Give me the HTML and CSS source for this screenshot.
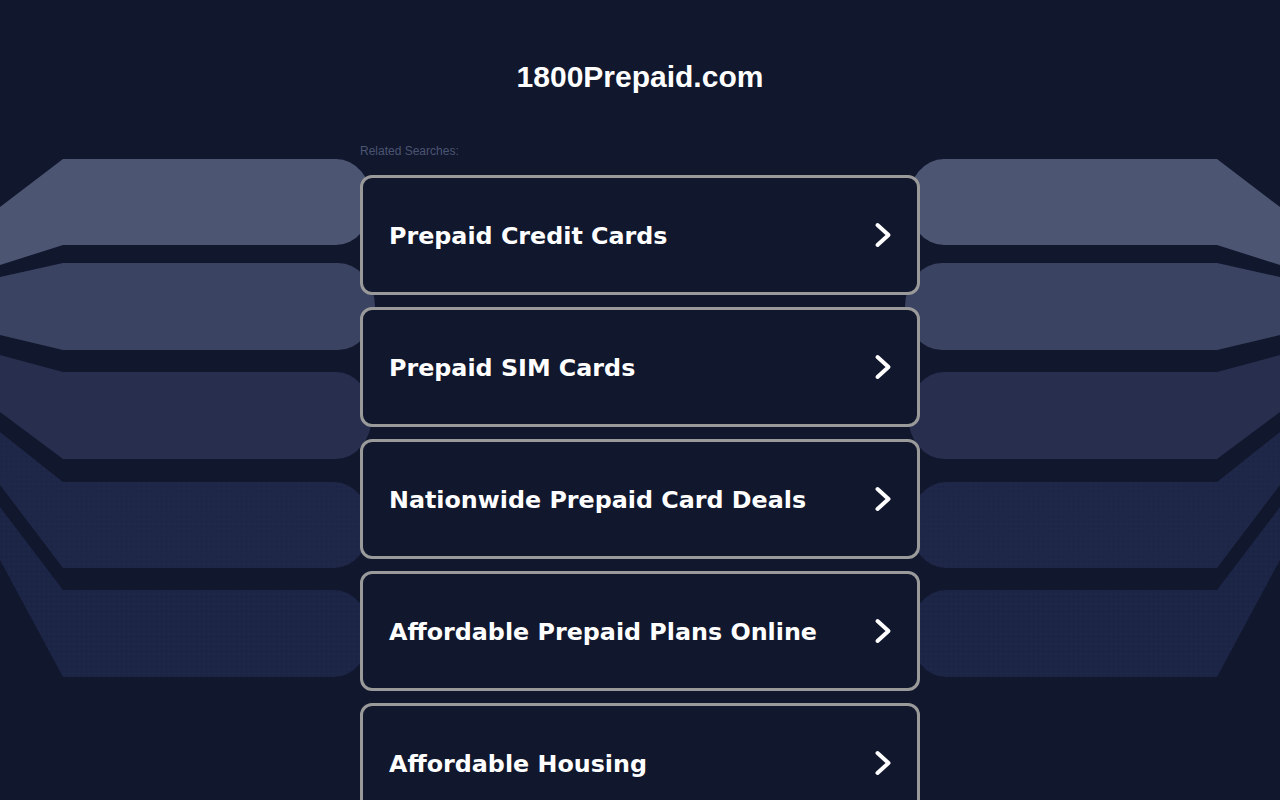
FILE: index.html
```html
<!DOCTYPE html>
<html lang="en">
<head>
<meta charset="utf-8">
<title>1800Prepaid.com</title>
<link rel="stylesheet" href="styles.css">
</head>
<body>
<svg class="backdrop" width="1280" height="800" viewBox="0 0 1280 800" aria-hidden="true">
  <defs>
    <pattern id="dots" width="5" height="5" patternUnits="userSpaceOnUse">
      <rect x="1" y="1" width="1" height="1" fill="#151b36" opacity="0.45"/>
      <rect x="3.5" y="3.5" width="1" height="1" fill="#283256" opacity="0.35"/>
    </pattern>
    <g id="wing">
      <path d="M0,207 L63,159 L336,159 A36,43 0 0 1 336,245 L63,245 L0,265 Z" fill="#4c5673"/>
      <path d="M0,277 L63,263 L338,263 A37,43.5 0 0 1 338,350 L63,350 L0,335 Z" fill="#3a4361"/>
      <path d="M0,355 L63,372 L336,372 A36,43.5 0 0 1 336,459 L63,459 L0,412 Z" fill="#272e4e"/>
      <path d="M0,432 L63,482 L334,482 A36,43 0 0 1 334,568 L63,568 L0,485 Z" fill="#1e2747"/>
      <path d="M0,432 L63,482 L334,482 A36,43 0 0 1 334,568 L63,568 L0,485 Z" fill="url(#dots)"/>
      <path d="M0,507 L63,590 L334,590 A36,43.5 0 0 1 334,677 L63,677 L0,560 Z" fill="#1c2546"/>
      <path d="M0,507 L63,590 L334,590 A36,43.5 0 0 1 334,677 L63,677 L0,560 Z" fill="url(#dots)"/>
    </g>
  </defs>
  <use href="#wing"/>
  <use href="#wing" transform="translate(1280,0) scale(-1,1)"/>
</svg>

<main class="page">
  <h1 class="domain">1800Prepaid.com</h1>
  <section class="related">
    <p class="related-label">Related Searches:</p>
    <ul class="links">
      <li><a class="link-card" href="#"><span class="link-text">Prepaid Credit Cards</span><svg class="chev" width="18" height="26" viewBox="0 0 18 26"><path d="M3.5 3 L14.5 13 L3.5 23" /></svg></a></li>
      <li><a class="link-card" href="#"><span class="link-text">Prepaid SIM Cards</span><svg class="chev" width="18" height="26" viewBox="0 0 18 26"><path d="M3.5 3 L14.5 13 L3.5 23" /></svg></a></li>
      <li><a class="link-card" href="#"><span class="link-text">Nationwide Prepaid Card Deals</span><svg class="chev" width="18" height="26" viewBox="0 0 18 26"><path d="M3.5 3 L14.5 13 L3.5 23" /></svg></a></li>
      <li><a class="link-card" href="#"><span class="link-text">Affordable Prepaid Plans Online</span><svg class="chev" width="18" height="26" viewBox="0 0 18 26"><path d="M3.5 3 L14.5 13 L3.5 23" /></svg></a></li>
      <li><a class="link-card" href="#"><span class="link-text">Affordable Housing</span><svg class="chev" width="18" height="26" viewBox="0 0 18 26"><path d="M3.5 3 L14.5 13 L3.5 23" /></svg></a></li>
    </ul>
  </section>
</main>
</body>
</html>
```

FILE: styles.css
```css
html, body {
  margin: 0;
  padding: 0;
  background: #11172d;
  height: 100%;
  overflow: hidden;
}

body {
  position: relative;
  font-family: "Liberation Sans", Arial, sans-serif;
  color: #ffffff;
}

.backdrop {
  position: absolute;
  left: 0;
  top: 0;
  z-index: 0;
  display: block;
}

.page {
  position: relative;
  z-index: 1;
  width: 560px;
  margin: 0 auto;
  padding-top: 59px;
}

.domain {
  margin: 0;
  font-family: "Liberation Sans", Arial, sans-serif;
  font-size: 30px;
  line-height: 36px;
  font-weight: 700;
  text-align: center;
  color: #ffffff;
}

.related {
  margin-top: 49px;
}

.related-label {
  margin: 0 0 17px;
  font-size: 12px;
  line-height: 14px;
  color: #4b5572;
}

.links {
  list-style: none;
  margin: 0;
  padding: 0;
  display: flex;
  flex-direction: column;
  gap: 12px;
}

.link-card {
  box-sizing: border-box;
  height: 120px;
  display: flex;
  align-items: center;
  padding: 0 25px 0 26px;
  border: 3px solid #9a9a9a;
  border-radius: 12px;
  background: #11172d;
  color: #ffffff;
  text-decoration: none;
}

.link-text {
  font-family: "DejaVu Sans", Verdana, sans-serif;
  font-weight: 700;
  font-size: 23.8px;
  line-height: 30px;
  padding-top: 2px;
  white-space: nowrap;
}

.chev {
  margin-left: auto;
  display: block;
  flex: none;
}

.chev path {
  fill: none;
  stroke: #ffffff;
  stroke-width: 4;
  stroke-linecap: round;
  stroke-linejoin: round;
}
```
